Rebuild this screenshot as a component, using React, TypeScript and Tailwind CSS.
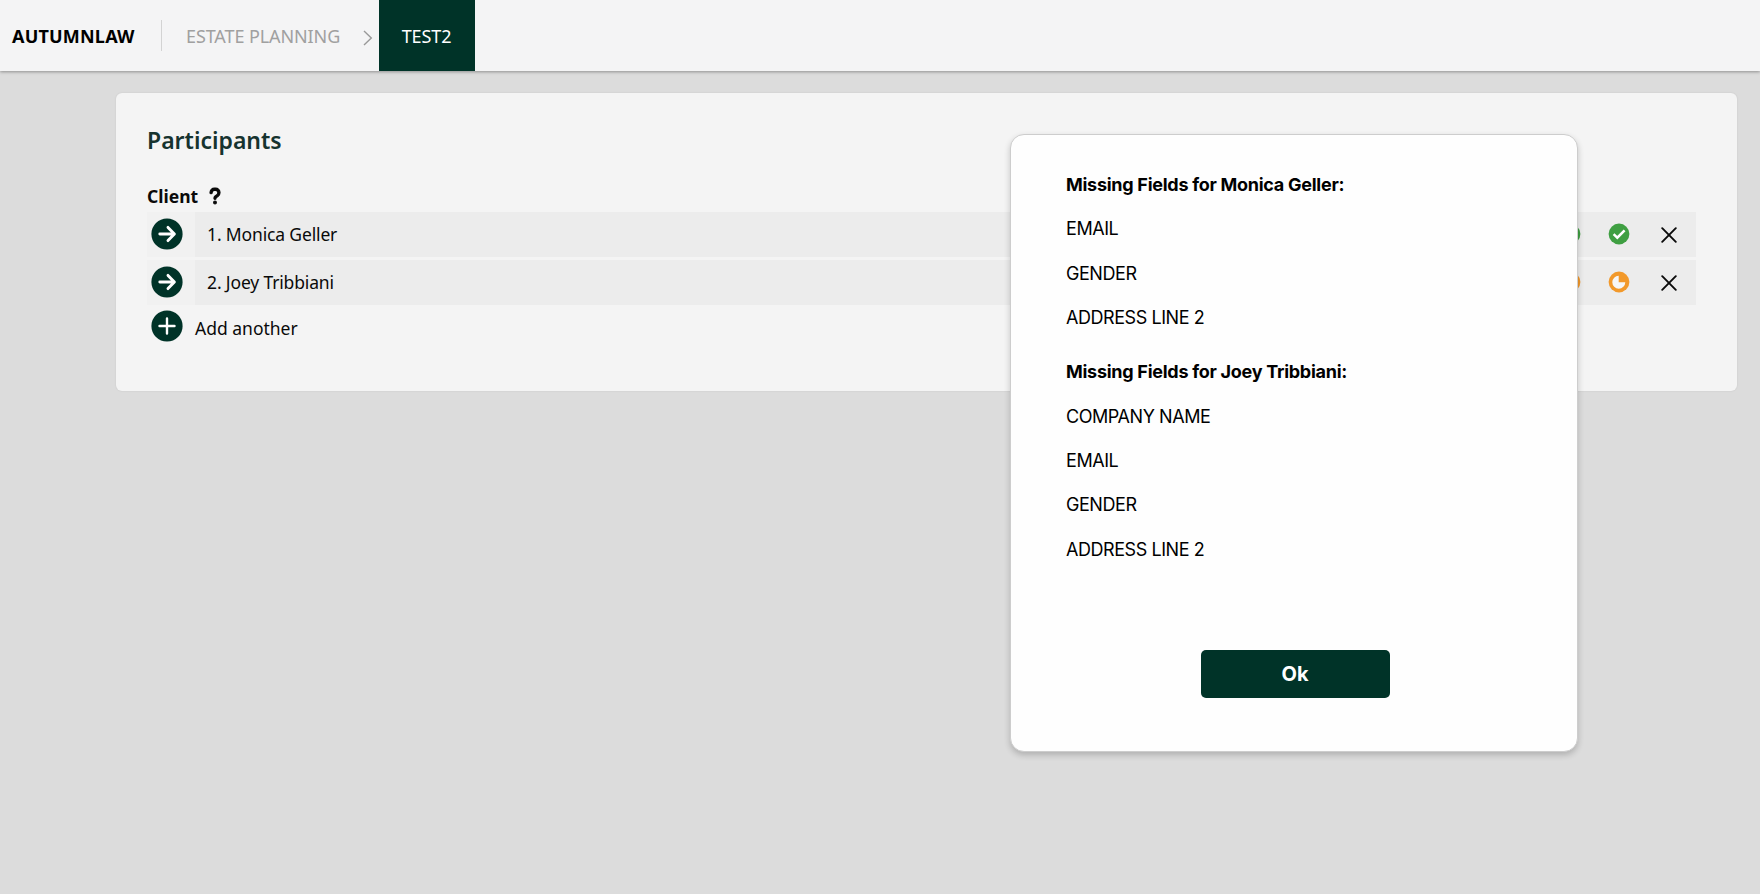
import type { ReactNode } from "react";
import { FaQuestion } from "react-icons/fa6";

type Status = "complete" | "partial";

interface Participant {
  name: string;
  status: Status;
}

const participants: Participant[] = [
  { name: "Monica Geller", status: "complete" },
  { name: "Joey Tribbiani", status: "partial" },
];

const missing = [
  { name: "Monica Geller", fields: ["EMAIL", "GENDER", "ADDRESS LINE 2"] },
  { name: "Joey Tribbiani", fields: ["COMPANY NAME", "EMAIL", "GENDER", "ADDRESS LINE 2"] },
];

function RoundButton({ label, children }: { label: string; children: ReactNode }) {
  return (
    <button aria-label={label} className="flex size-8 shrink-0 items-center justify-center rounded-full">
      <svg viewBox="0 0 32 32" className="size-8" fill="none" stroke="white" strokeLinecap="round" strokeLinejoin="round">
        <circle cx="16" cy="16" r="15.6" fill="#003328" stroke="none" />
        {children}
      </svg>
    </button>
  );
}

function StatusIcon({ status }: { status: Status }) {
  if (status === "complete") {
    return (
      <svg viewBox="0 0 22 22" className="size-[22px] shrink-0">
        <circle cx="11" cy="11" r="10.4" fill="#3f9f42" />
        <path d="M5.6 11.2 9.3 14.7 16.6 7.4" fill="none" stroke="white" strokeWidth="2.5" />
      </svg>
    );
  }
  return (
    <svg viewBox="0 0 22 22" className="size-[22px] shrink-0">
      <circle cx="11" cy="11" r="10.4" fill="#f2992b" />
      <path d="M10.7 4.7A6.5 6.5 0 1 0 17.3 11.3H10.7Z" fill="#f7f7f7" />
    </svg>
  );
}

function ParticipantRow({ index, person }: { index: number; person: Participant }) {
  return (
    <div className="flex h-[45px] bg-[#f1f1f1]">
      <div className="flex w-12 items-center pb-px pl-1">
        <RoundButton label="Open">
          <path d="M8.8 16H23.2M17 9.4l6.4 6.6-6.4 6.6" strokeWidth="2.9" />
        </RoundButton>
      </div>
      <div className="flex flex-1 items-center bg-[#ececec] pr-[19px] pl-3">
        <span className="flex-1 text-[17.5px] tracking-[-0.15px]">
          {index}. {person.name}
        </span>
        <div className="flex items-center gap-[27px] pb-px">
          <StatusIcon status={person.status} />
          <StatusIcon status={person.status} />
        </div>
        <button aria-label="Remove" className="ml-[31px]">
          <svg viewBox="0 0 16 16" className="size-4" fill="none" stroke="#0a0a0a" strokeWidth="1.9" strokeLinecap="round">
            <path d="M1.2 1.2 14.8 14.8M14.8 1.2 1.2 14.8" />
          </svg>
        </button>
      </div>
    </div>
  );
}

function Header() {
  return (
    <header className="flex h-[71px] items-center bg-[#f4f4f5] shadow-[0_1px_3px_rgba(0,0,0,0.35)]">
      <div className="w-[161px] pt-0.5 pl-3 text-[18px] font-bold tracking-[0.2px] text-black">AUTUMNLAW</div>
      <div className="h-[31px] w-px bg-[#d3d3d3]" />
      <div className="w-[201px] pt-0.5 pl-6 text-[18px] tracking-[-0.1px] whitespace-nowrap text-[#a0a0a0]">ESTATE PLANNING</div>
      <svg viewBox="0 0 10 16" className="mt-1 h-4 w-2.5" fill="none" stroke="#999999" strokeWidth="1.4">
        <path d="M1 1 8.3 8 1 15" />
      </svg>
      <div className="ml-1.5 flex h-full w-24 items-center justify-center bg-[#003328] pt-0.5 pr-px text-[18px] tracking-[-0.1px] text-white">TEST2</div>
    </header>
  );
}

function MissingFieldsDialog() {
  return (
    <div
      role="dialog"
      className="absolute top-[134px] left-[1010px] flex h-[618px] w-[568px] flex-col rounded-[14px] border border-[#cdcdcd] bg-[#fefefe] pr-[54px] pl-[55px] pt-7 font-['Inter',sans-serif] text-black shadow-[0_3px_6px_rgba(0,0,0,0.2)]"
    >
      {missing.map((group) => (
        <section key={group.name} className="mb-[9.6px]">
          <h2 className="text-[18px] leading-[44.4px] font-bold tracking-[-0.27px]">Missing Fields for {group.name}:</h2>
          <ul>
            {group.fields.map((field) => (
              <li key={field} className="text-[18px] leading-[44.4px] tracking-[-0.44px]">
                {field}
              </li>
            ))}
          </ul>
        </section>
      ))}
      <button className="mt-[68px] ml-px h-12 w-[189px] self-center rounded-[5px] bg-[#003328] text-[20px] font-bold text-white">Ok</button>
    </div>
  );
}

export default function App() {
  return (
    <div className="relative h-[894px] w-[1760px] overflow-hidden bg-[#dcdcdc] font-['Noto_Sans',sans-serif] text-[#0a0a0a]">
      <Header />
      <main className="mt-[22px] ml-[116px] h-[298px] w-[1621px] rounded-md bg-[#f4f4f4] pr-[41px] pl-[31px] shadow-[0_0_2px_rgba(0,0,0,0.1)]">
        <h1 className="pt-[31px] text-[23px] leading-8 font-semibold text-[#16332f]">Participants</h1>
        <div className="flex h-14 items-end gap-2 pb-1">
          <span className="text-[17.5px] leading-6 font-bold">Client</span>
          <FaQuestion className="mb-[3px] size-[18px]" stroke="#0a0a0a" strokeWidth="30" />
        </div>
        <div className="flex flex-col gap-[3px]">
          {participants.map((person, i) => (
            <ParticipantRow key={person.name} index={i + 1} person={person} />
          ))}
        </div>
        <div className="mt-[5px] flex items-center gap-3 pl-1">
          <RoundButton label="Add">
            <path d="M16 8.5V23.5M8.5 16H23.5" strokeWidth="2.4" />
          </RoundButton>
          <span className="pt-1 text-[17.5px]">Add another</span>
        </div>
      </main>
      <MissingFieldsDialog />
    </div>
  );
}
